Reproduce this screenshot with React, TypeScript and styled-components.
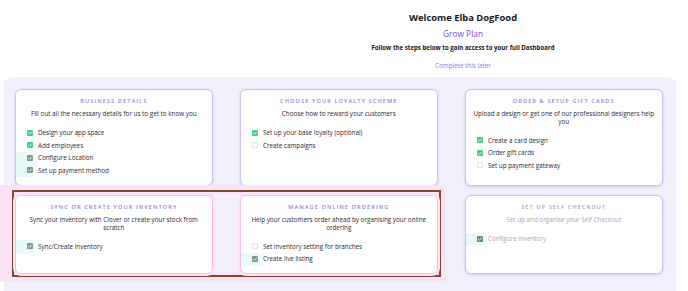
import React from "react";
import styled, { createGlobalStyle } from "styled-components";

type Status = "done" | "pending" | "todo";

interface Step {
  label: string;
  status: Status;
}

interface CardData {
  title: string;
  text: string;
  steps: Step[];
}

const topCards: CardData[] = [
  {
    title: "Business Details",
    text: "Fill out all the necessary details for us to get to know you",
    steps: [
      { label: "Design your app space", status: "done" },
      { label: "Add employees", status: "done" },
      { label: "Configure Location", status: "pending" },
      { label: "Set up payment method", status: "pending" },
    ],
  },
  {
    title: "Choose your loyalty scheme",
    text: "Choose how to reward your customers",
    steps: [
      { label: "Set up your base loyalty (optional)", status: "done" },
      { label: "Create campaigns", status: "todo" },
    ],
  },
  {
    title: "Order & Setup gift cards",
    text: "Upload a design or get one of our professional designers help you",
    steps: [
      { label: "Create a card design", status: "done" },
      { label: "Order gift cards", status: "done" },
      { label: "Set up payment gateway", status: "todo" },
    ],
  },
];

const highlighted: CardData[] = [
  {
    title: "Sync or create your inventory",
    text: "Sync your inventory with Clover or create your stock from scratch",
    steps: [{ label: "Sync/Create inventory", status: "pending" }],
  },
  {
    title: "Manage online ordering",
    text: "Help your customers order ahead by organising your online ordering",
    steps: [
      { label: "Set inventory setting for branches", status: "todo" },
      { label: "Create live listing", status: "pending" },
    ],
  },
];

const selfCheckout: CardData = {
  title: "Set up self checkout",
  text: "Set up and organise your Self Checkout",
  steps: [{ label: "Configure inventory", status: "pending" }],
};

const Box = ({ status, muted }: { status: Status; muted?: boolean }) => {
  if (status === "todo") {
    return (
      <CheckIcon viewBox="0 0 6 6">
        <rect x="0.4" y="0.4" width="5.2" height="5.2" rx="0.8" fill="#fff" stroke="#c9c9cf" strokeWidth="0.6" />
      </CheckIcon>
    );
  }
  const fill = status === "done" ? "#3fcf8c" : muted ? "#6f8a7b" : "#7f9a8b";
  return (
    <CheckIcon viewBox="0 0 6 6">
      <rect x="0" y="0" width="6" height="6" rx="0.9" fill={fill} />
      <path d="M1.4 3.1 L2.6 4.2 L4.7 1.9" fill="none" stroke="#fff" strokeWidth="0.8" strokeLinecap="round" strokeLinejoin="round" />
    </CheckIcon>
  );
};

const StepCard = ({ card, $tone }: { card: CardData; $tone: "normal" | "pink" | "muted" }) => (
  <Card $tone={$tone}>
    <CardTitle $muted={$tone === "muted"}>{card.title}</CardTitle>
    <CardText $muted={$tone === "muted"}>{card.text}</CardText>
    <StepList>
      {card.steps.map((step) => (
        <StepRow key={step.label} $pending={step.status === "pending"} $muted={$tone === "muted"}>
          <Box status={step.status} muted={$tone === "muted"} />
          <span>{step.label}</span>
        </StepRow>
      ))}
    </StepList>
  </Card>
);

const App = () => {
  return (
    <>
      <GlobalStyle />
      <Header>
        <Welcome>Welcome Elba DogFood</Welcome>
        <Plan>Grow Plan</Plan>
        <Intro>Follow the steps below to gain access to your full Dashboard</Intro>
        <Later>Complete this later</Later>
      </Header>
      <Panel>
        <Grid>
          {topCards.map((card) => (
            <StepCard key={card.title} card={card} $tone="normal" />
          ))}
          <Highlight>
            {highlighted.map((card) => (
              <StepCard key={card.title} card={card} $tone="pink" />
            ))}
          </Highlight>
          <StepCard card={selfCheckout} $tone="muted" />
        </Grid>
      </Panel>
    </>
  );
};

const GlobalStyle = createGlobalStyle`
  html, body {
    margin: 0;
    padding: 0;
    background: #ffffff;
    overflow: hidden;
  }
  body {
    font-family: "Open Sans", "Noto Sans", sans-serif;
    color: #2b2b33;
  }
`;

const Header = styled.header`
  padding: 12px 0 0 238px;
  display: flex;
  flex-direction: column;
  align-items: center;
  text-align: center;
`;

const Welcome = styled.h1`
  margin: 0;
  font-size: 9.4px;
  line-height: 12px;
  font-weight: 700;
  color: #16161c;
`;

const Plan = styled.div`
  margin-top: 5px;
  font-size: 8.4px;
  line-height: 10px;
  font-weight: 500;
  color: #7a52d6;
`;

const Intro = styled.div`
  margin-top: 5px;
  font-size: 6.1px;
  line-height: 8px;
  font-weight: 700;
  color: #16161c;
`;

const Later = styled.div`
  margin-top: 10px;
  font-size: 6.3px;
  line-height: 8px;
  color: #8a7ee6;
`;

const Panel = styled.section`
  margin: 7px 12px 0 4px;
  padding: 12px 11px 30px;
  background: #f3f0fe;
  border-radius: 8px 8px 0 0;
`;

const Grid = styled.div`
  display: grid;
  grid-template-columns: repeat(3, 197.5px);
  grid-template-rows: 97px 79px;
  column-gap: 27.5px;
  row-gap: 9px;
`;

const Highlight = styled.div`
  grid-column: span 2;
  display: grid;
  grid-template-columns: repeat(2, 197.5px);
  column-gap: 27.5px;
  margin: -5px -3px -3px -3px;
  padding: 3px 1px 1px 1px;
  border: 2px solid #7b4a2e;
  box-shadow: 0 0 0 5px #fde1f6, -8px 0 0 5px #fde1f6, inset 0 0 0 2px #fde1f6;
`;

const Card = styled.div<{ $tone: "normal" | "pink" | "muted" }>`
  box-sizing: border-box;
  display: flex;
  flex-direction: column;
  padding: 7px 0 6px;
  background: #ffffff;
  border-radius: 6px;
  border: 1px solid ${({ $tone }) => ($tone === "pink" ? "#f4bfe8" : "#cbc2f1")};
  box-shadow: ${({ $tone }) =>
    $tone === "pink"
      ? "0 0 0 2px #fde1f6, 0 1px 3px rgba(110, 90, 200, 0.2)"
      : "0 1px 3px rgba(110, 90, 200, 0.28)"};
`;

const CardTitle = styled.div<{ $muted: boolean }>`
  padding: 0 10px;
  text-align: center;
  text-transform: uppercase;
  font-size: 5.6px;
  line-height: 8px;
  font-weight: 600;
  letter-spacing: 1.1px;
  color: ${({ $muted }) => ($muted ? "#a3a3b0" : "#8c80e6")};
`;

const CardText = styled.p<{ $muted: boolean }>`
  margin: 5px 0 0;
  padding: 0 7px;
  text-align: center;
  font-size: 6.3px;
  line-height: 7.5px;
  color: ${({ $muted }) => ($muted ? "#a8a8b0" : "#2b2b33")};
`;

const StepList = styled.ul`
  list-style: none;
  margin: 9px 0 0;
  padding: 0;
`;

const StepRow = styled.li<{ $pending: boolean; $muted: boolean }>`
  display: flex;
  align-items: center;
  gap: 5px;
  height: 12.5px;
  padding-left: 11px;
  font-size: 6.3px;
  color: ${({ $muted }) => ($muted ? "#a8a8b0" : "#2b2b33")};
  background: ${({ $pending }) =>
    $pending ? "linear-gradient(to right, #e6faf7 0, #e6faf7 15px, rgba(230, 250, 247, 0) 26px)" : "none"};
`;

const CheckIcon = styled.svg`
  width: 6px;
  height: 6px;
  flex-shrink: 0;
`;

export default App;
